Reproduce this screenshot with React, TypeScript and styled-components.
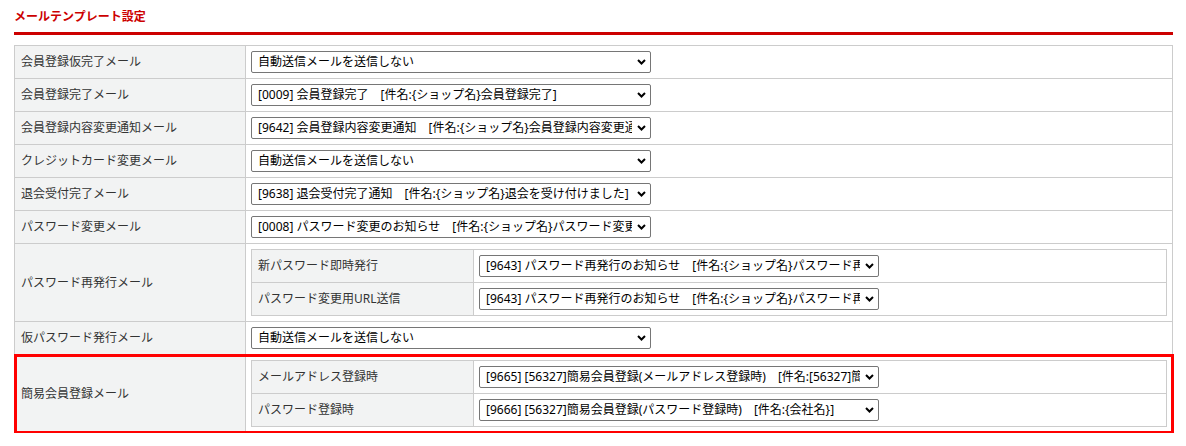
import React from "react";
import styled, { createGlobalStyle } from "styled-components";

const FONT = `"Noto Sans", "Noto Sans CJK JP", sans-serif`;

const GlobalStyle = createGlobalStyle`
  html, body { margin: 0; padding: 0; background: #fff; }
  body {
    font-family: ${FONT};
    font-size: 12px;
    color: #333;
  }
`;

const Page = styled.div`
  padding: 8px 13px 0 14px;
`;

const Title = styled.h2`
  margin: 0 0 10px;
  font-size: 12px;
  line-height: 18px;
  font-weight: 700;
  color: #cc0000;
  padding-bottom: 6px;
  border-bottom: 3px solid #cc0000;
`;

const Table = styled.table`
  width: 100%;
  border-collapse: collapse;
  border: 1px solid #cccccc;
`;

const Row = styled.tr<{ $highlight?: boolean }>`
  ${(p) =>
    p.$highlight
      ? `outline: 3px solid #ff0000; outline-offset: -2px;`
      : ``}
`;

const LabelCell = styled.th<{ $w: number }>`
  width: ${(p) => p.$w}px;
  box-sizing: border-box;
  background: #f2f3f3;
  border: 1px solid #cccccc;
  padding: 5px 6px;
  text-align: left;
  font-weight: 400;
  color: #333;
  white-space: nowrap;
  line-height: 22px;
  height: 22px;
`;

const ValueCell = styled.td`
  background: #fff;
  border: 1px solid #cccccc;
  padding: 5px 5px;
  line-height: 22px;
`;

const SelectWrap = styled.div`
  position: relative;
  display: block;
  width: 400px;
  height: 22px;
`;

const Select = styled.select`
  appearance: none;
  -webkit-appearance: none;
  box-sizing: border-box;
  display: block;
  width: 100%;
  height: 22px;
  margin: 0;
  padding: 0 18px 0 6px;
  border: 1px solid #767676;
  border-radius: 2px;
  background: #fff;
  color: #000;
  font-family: ${FONT};
  font-size: 12px;
  line-height: 20px;
`;

const Chevron = styled.svg`
  position: absolute;
  right: 5px;
  top: 8px;
  width: 9px;
  height: 6px;
  pointer-events: none;
`;

const MailSelect = ({ text }: { text: string }) => (
  <SelectWrap>
    <Select defaultValue={text}>
      <option value={text}>{text}</option>
    </Select>
    <Chevron viewBox="0 0 9 6">
      <path d="M1 1 L4.5 4.5 L8 1" fill="none" stroke="#000" strokeWidth="2" />
    </Chevron>
  </SelectWrap>
);

const NONE = "自動送信メールを送信しない";

type Sub = { label: string; value: string };
type Item = { label: string; value?: string; subs?: Sub[]; highlight?: boolean };

const PW = "[9643] パスワード再発行のお知らせ　[件名:{ショップ名}パスワード再発行のお知らせ]";

const items: Item[] = [
  { label: "会員登録仮完了メール", value: NONE },
  { label: "会員登録完了メール", value: "[0009] 会員登録完了　[件名:{ショップ名}会員登録完了]" },
  { label: "会員登録内容変更通知メール", value: "[9642] 会員登録内容変更通知　[件名:{ショップ名}会員登録内容変更通知]" },
  { label: "クレジットカード変更メール", value: NONE },
  { label: "退会受付完了メール", value: "[9638] 退会受付完了通知　[件名:{ショップ名}退会を受け付けました]" },
  { label: "パスワード変更メール", value: "[0008] パスワード変更のお知らせ　[件名:{ショップ名}パスワード変更のお知らせ]" },
  {
    label: "パスワード再発行メール",
    subs: [
      { label: "新パスワード即時発行", value: PW },
      { label: "パスワード変更用URL送信", value: PW },
    ],
  },
  { label: "仮パスワード発行メール", value: NONE },
  {
    label: "簡易会員登録メール",
    highlight: true,
    subs: [
      { label: "メールアドレス登録時", value: "[9665] [56327]簡易会員登録(メールアドレス登録時)　[件名:[56327]簡易会員登録]" },
      { label: "パスワード登録時", value: "[9666] [56327]簡易会員登録(パスワード登録時)　[件名:{会社名}]" },
    ],
  },
];

export default function App() {
  return (
    <>
      <GlobalStyle />
      <Page>
        <Title>メールテンプレート設定</Title>
        <Table>
          <tbody>
            {items.map((it) => (
              <Row key={it.label} $highlight={it.highlight}>
                <LabelCell $w={231}>{it.label}</LabelCell>
                <ValueCell>
                  {it.subs ? (
                    <Table>
                      <tbody>
                        {it.subs.map((s) => (
                          <tr key={s.label}>
                            <LabelCell $w={222}>{s.label}</LabelCell>
                            <ValueCell>
                              <MailSelect text={s.value} />
                            </ValueCell>
                          </tr>
                        ))}
                      </tbody>
                    </Table>
                  ) : (
                    <MailSelect text={it.value!} />
                  )}
                </ValueCell>
              </Row>
            ))}
          </tbody>
        </Table>
      </Page>
    </>
  );
}
